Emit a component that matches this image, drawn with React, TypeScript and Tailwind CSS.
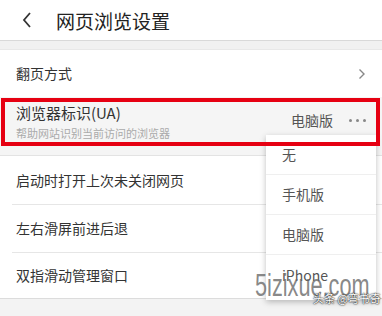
import React from "react";

const font = { fontFamily: '"Noto Sans CJK SC", "Noto Sans", sans-serif' };

export default function App() {
  return (
    <div className="relative w-[382px] h-[316px] overflow-hidden bg-white" style={font}>
      {/* header */}
      <div className="h-[40px] flex items-center">
        <svg width="12" height="18" viewBox="0 0 12 18" className="ml-[21px]">
          <path d="M9 2 L3 9 L9 16" fill="none" stroke="#333" strokeWidth="1.8" />
        </svg>
        <div className="ml-[23px] text-[19px] text-[#222] leading-none">网页浏览设置</div>
      </div>
      <div className="h-[10px] bg-[#f1f1f1] border-t border-[#d9d9d9] border-b border-b-[#e8e8e8]" />
      {/* row 1 */}
      <div className="h-[47px] flex items-center justify-between pl-4 pr-[16px]">
        <span className="text-[14px] text-[#333]">翻页方式</span>
        <svg width="8" height="12" viewBox="0 0 8 12">
          <path d="M1.5 1.5 L6 6 L1.5 10.5" fill="none" stroke="#888" strokeWidth="1.4" />
        </svg>
      </div>
      {/* UA row */}
      <div className="h-[59px] bg-[#f5f5f5] border-b border-[#e3e3e3] flex items-start justify-between pl-4 pr-4 pt-[5px]">
        <div className="flex flex-col">
          <span className="text-[15px] text-[#333] leading-[22px]">浏览器标识(UA)</span>
          <span className="text-[11px] text-[#aaa] leading-[16px] mt-[1px]">帮助网站识别当前访问的浏览器</span>
        </div>
        <div className="flex items-center mt-[8px]">
          <span className="text-[14px] text-[#555]">电脑版</span>
          <span className="ml-[16px] flex gap-[4px]">
            <span className="w-[3px] h-[3px] rounded-full bg-[#888]" />
            <span className="w-[3px] h-[3px] rounded-full bg-[#888]" />
            <span className="w-[3px] h-[3px] rounded-full bg-[#888]" />
          </span>
        </div>
      </div>
      {/* rows */}
      <div className="h-[48px] flex items-center pl-4">
        <span className="text-[14px] text-[#333]">启动时打开上次未关闭网页</span>
      </div>
      <div className="ml-3 h-px bg-[#e6e6e6]" />
      <div className="h-[47px] flex items-center pl-4">
        <span className="text-[14px] text-[#333]">左右滑屏前进后退</span>
      </div>
      <div className="ml-3 h-px bg-[#e6e6e6]" />
      <div className="h-[46px] flex items-center pl-4 border-b border-[#dcdcdc]">
        <span className="text-[14px] text-[#333]">双指滑动管理窗口</span>
      </div>
      <div className="h-[20px] bg-[#f3f3f3] border-b border-[#e6e6e6]" />

      {/* dropdown */}
      <div className="absolute left-[266px] top-[135px] w-[110px] h-[165px] bg-white z-20 shadow-[0_2px_6px_rgba(0,0,0,0.25)] flex flex-col">
        {["无", "手机版", "电脑版", "iPhone"].map((t, i) => (
          <div
            key={t}
            className={`h-[40px] flex items-center pl-4 text-[14px] text-[#555] ${i < 3 ? "border-b border-[#efefef]" : ""}`}
          >
            {t}
          </div>
        ))}
      </div>

      {/* red annotation */}
      <div className="absolute left-[1px] top-[98px] w-[379px] h-[48px] border-4 border-[#e60012] z-30 pointer-events-none" />

      {/* watermark */}
      <div
        className="absolute left-[255px] top-[270px] z-40 text-[31px] leading-[32px] whitespace-nowrap text-[rgba(105,105,105,0.8)] origin-left [transform:scaleX(0.7)]"
        style={{ fontFamily: '"Liberation Sans", sans-serif' }}
      >
        5izixue.com
      </div>
      <div
        className="absolute left-[313px] top-[293px] z-50 text-[11px] leading-none whitespace-nowrap text-white"
        style={{ textShadow: "0 0 2px #000, 0 0 1px #000" }}
      >
        头条 @弯书奇
      </div>
    </div>
  );
}
